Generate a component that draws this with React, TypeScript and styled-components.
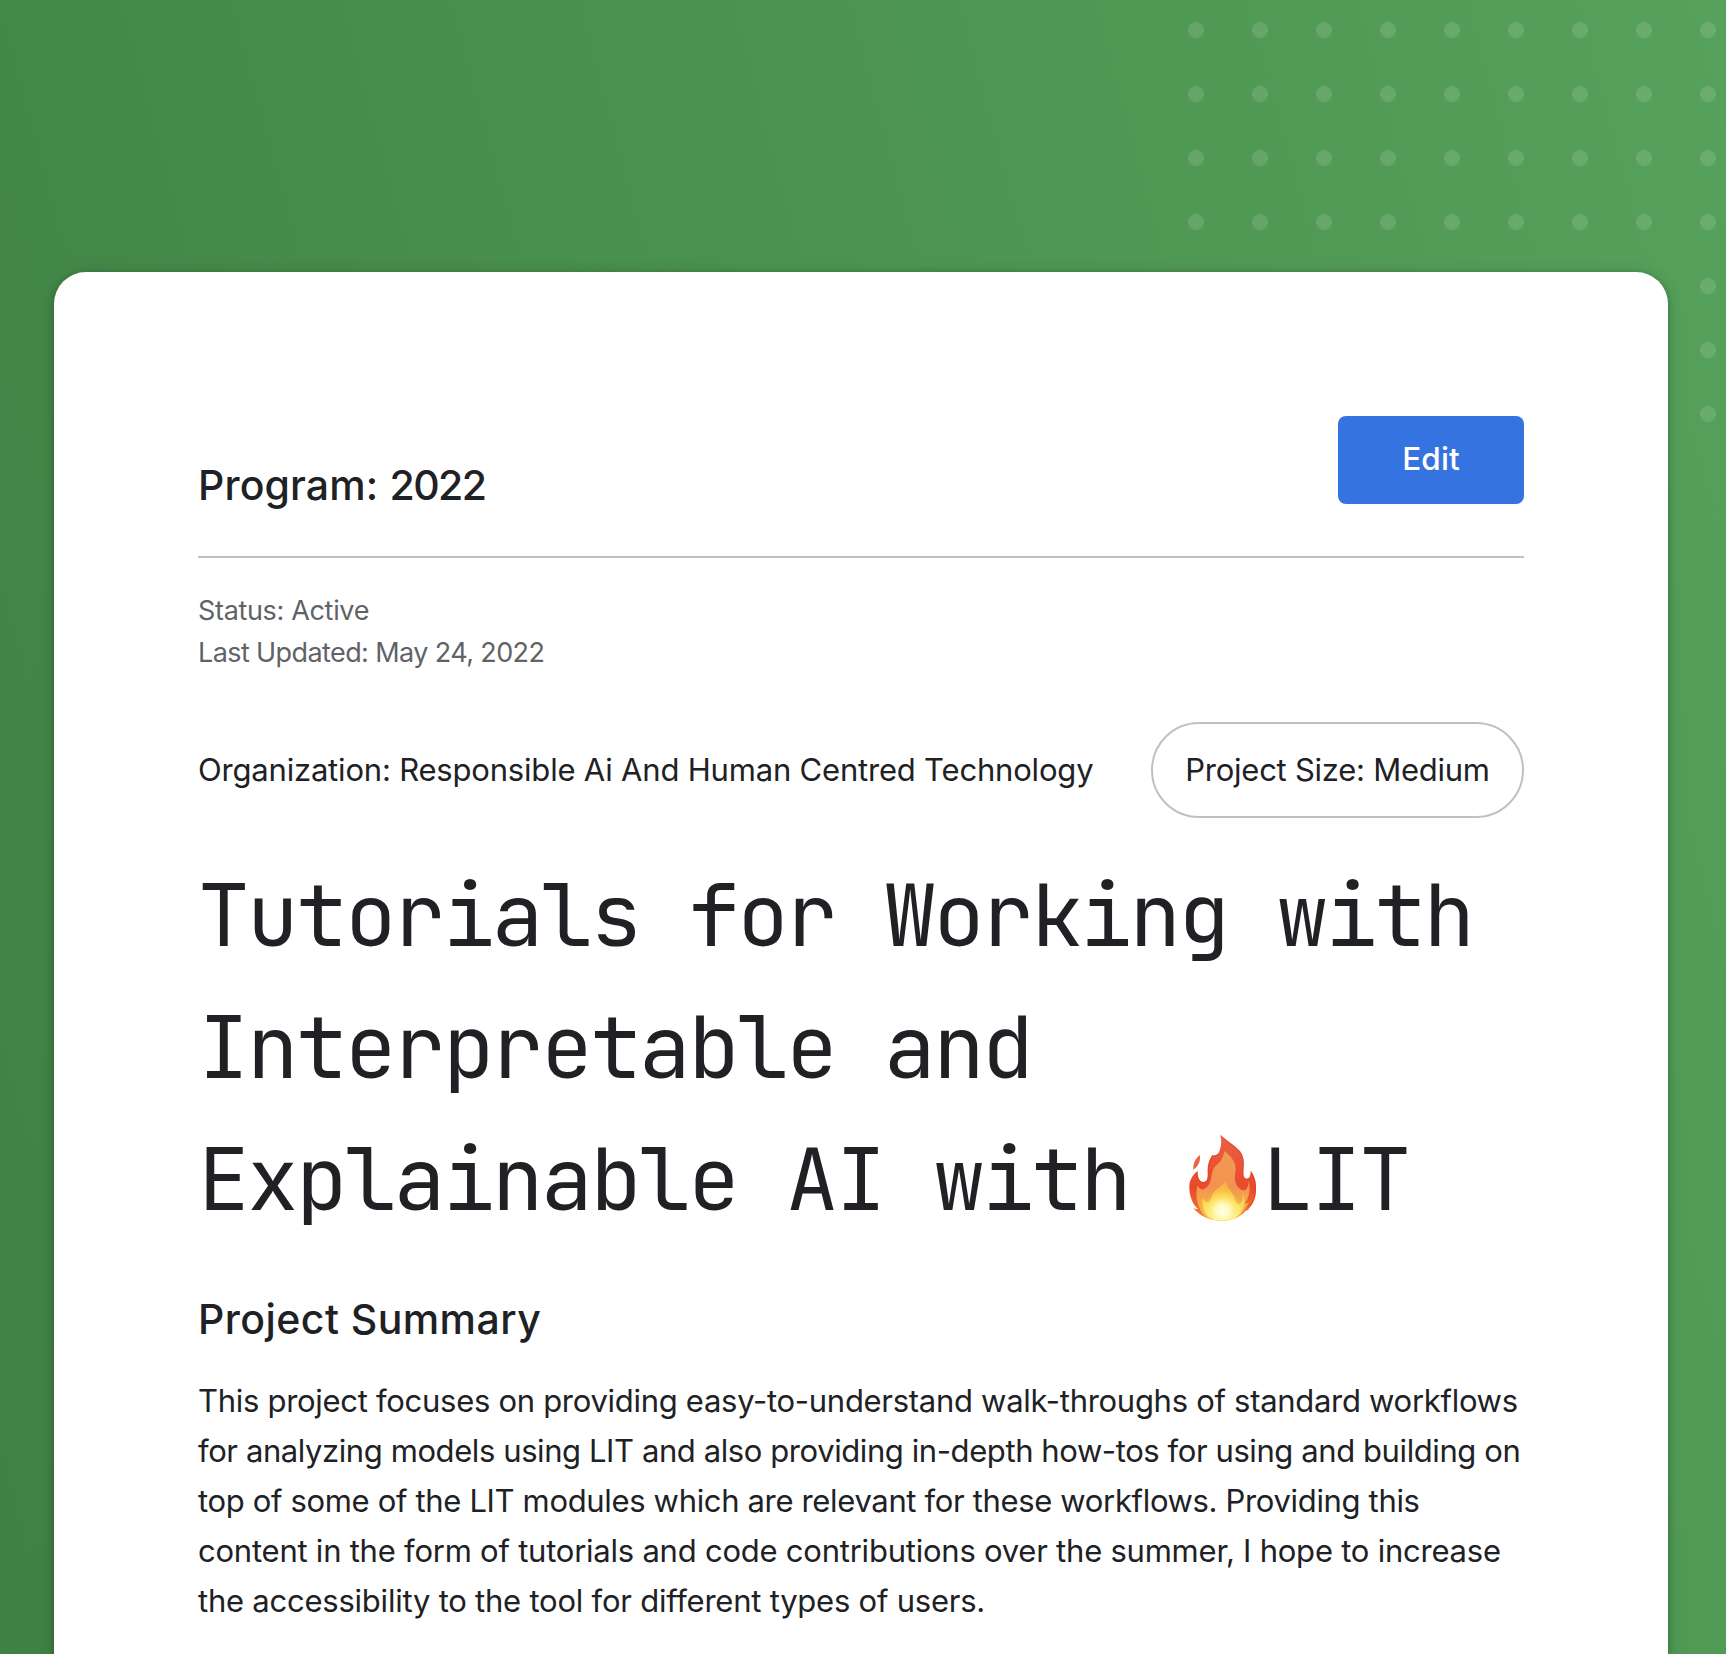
import React from 'react';
import styled, { createGlobalStyle } from 'styled-components';

const sans = `"Google Sans", Inter, Roboto, sans-serif`;
const mono = `"JetBrains Mono", "Roboto Mono", "DejaVu Sans Mono", monospace`;
const ink = '#202124';
const rule = '#bdc1c6';

const GlobalStyle = createGlobalStyle`
  *, *::before, *::after { box-sizing: border-box; }
  body { margin: 0; font-family: ${sans}; color: ${ink}; }
  h1, h2, p { margin: 0; font-weight: 400; }
`;

const Page = styled.div`
  position: relative;
  height: 1654px;
  padding: 272px 58px 0 54px;
  overflow: hidden;
  background: linear-gradient(75deg, #3f8143 0%, #56a15b 100%);
`;

const DotPattern = styled.div`
  position: absolute;
  top: -2px;
  right: -14px;
  width: 576px;
  height: 448px;
  background: radial-gradient(circle at center, rgba(255, 255, 255, 0.12) 7.6px, transparent 8.4px) 0 0 / 64px 64px;
`;

const Card = styled.main`
  position: relative;
  height: 1460px;
  padding: 144px;
  border-radius: 32px;
  background: #fff;
  box-shadow: 0 2px 6px rgba(0, 0, 0, 0.2), 0 2px 16px rgba(0, 0, 0, 0.15);
`;

const Header = styled.header`
  display: flex;
  align-items: flex-end;
  justify-content: space-between;
  padding-bottom: 52px;
  border-bottom: 2px solid ${rule};
`;

const Program = styled.h2`
  font-size: 41px;
  font-weight: 500;
  line-height: 38px;
  letter-spacing: 0.13px;
`;

const Year = styled.span`
  letter-spacing: -1.6px;
`;

const EditButton = styled.button`
  width: 186px;
  height: 88px;
  padding: 0 0 3px;
  border: 0;
  border-radius: 8px;
  background: #3573e1;
  color: #fff;
  font: 500 31.5px ${sans};
  letter-spacing: 0.1px;
`;

const Meta = styled.div`
  margin-top: 32px;
  color: #5f6368;
  font-size: 27px;
  line-height: 42px;
`;

const Line = styled.span<{ $tracking: number }>`
  display: block;
  white-space: nowrap;
  letter-spacing: ${({ $tracking }) => $tracking}px;
`;

const DetailRow = styled.div`
  display: flex;
  align-items: stretch;
  justify-content: space-between;
  height: 96px;
  margin-top: 48px;
  font-size: 31px;
`;

const Organization = styled.div`
  display: flex;
  align-items: center;
  padding-bottom: 2px;
`;

const SizePill = styled.div`
  display: flex;
  align-items: center;
  justify-content: center;
  width: 373px;
  padding-bottom: 2px;
  border: 2px solid ${rule};
  border-radius: 48px;
`;

const Title = styled.h1`
  margin-top: 31px;
  font-family: ${mono};
  font-size: 86px;
  line-height: 132px;
  letter-spacing: -0.03em;
  white-space: nowrap;
`;

const TitleLine = styled.span`
  display: block;
  height: 132px;
`;

const Flame = styled.svg`
  display: inline-block;
  width: 84px;
  height: 100px;
  margin: 0 -3px 0 2px;
  vertical-align: -15px;
`;

const SectionTitle = styled.h2`
  margin-top: 50px;
  font-size: 41px;
  font-weight: 500;
  line-height: 48px;
  letter-spacing: 0.45px;
`;

const Summary = styled.p`
  margin-top: 33px;
  font-size: 31px;
  line-height: 50px;
`;

const summaryLines: [string, number][] = [
  ['This project focuses on providing easy-to-understand walk-throughs of standard workflows', -0.29],
  ['for analyzing models using LIT and also providing in-depth how-tos for using and building on', -0.41],
  ['top of some of the LIT modules which are relevant for these workflows. Providing this', -0.34],
  ['content in the form of tutorials and code contributions over the summer, I hope to increase', -0.23],
  ['the accessibility to the tool for different types of users.', -0.23],
];

const FlameIcon = () => (
  <Flame viewBox="0 0 252 300" role="img" aria-label="fire">
    <defs>
      <linearGradient id="outer" x1="0" y1="0" x2="0" y2="1">
        <stop offset="0" stopColor="#ec6244" />
        <stop offset="0.6" stopColor="#e8492c" />
        <stop offset="0.85" stopColor="#ee6f2e" />
        <stop offset="1" stopColor="#f0a04a" />
      </linearGradient>
      <linearGradient id="middle" x1="0" y1="0" x2="0" y2="1">
        <stop offset="0" stopColor="#f29a55" />
        <stop offset="0.5" stopColor="#f29350" />
        <stop offset="1" stopColor="#f8c440" />
      </linearGradient>
      <linearGradient id="inner" x1="0" y1="0" x2="0" y2="1">
        <stop offset="0" stopColor="#f5a848" />
        <stop offset="0.5" stopColor="#fbd54a" />
        <stop offset="1" stopColor="#fdf08a" />
      </linearGradient>
      <radialGradient id="core" gradientUnits="userSpaceOnUse" cx="128" cy="258" r="62">
        <stop offset="0" stopColor="#fffff0" />
        <stop offset="0.35" stopColor="#fffbc0" stopOpacity="0.95" />
        <stop offset="1" stopColor="#ffe650" stopOpacity="0" />
      </radialGradient>
      <clipPath id="body">
        <path d="M121 30C143 50 165 61 180 79C197 101 190 126 190 146C190 156 194 161 201 161C209 161 213 150 212 138C224 151 230 176 228 196C227 220 219 239 206 250L206 254L196 258C181 276 157 287 128 287C91 287 62 276 40 249C46 252 50 253 54 252C37 236 27 211 28 182C29 163 41 146 53 138C52 153 56 169 68 171C85 173 84 151 83 137C83 118 88 104 97 91C105 92 111 90 115 85C123 72 126 49 121 30Z" />
      </clipPath>
    </defs>
    <path d="M60 90C50 97 38 113 40 134C52 126 62 112 60 90Z" fill="#e9644b" />
    <g clipPath="url(#body)">
      <rect x="20" y="25" width="215" height="270" fill="url(#outer)" />
      <path d="M121 30C143 50 165 61 180 79C197 101 190 126 190 146C190 156 194 161 201 161C209 161 213 150 212 138C224 151 230 176 228 196C227 220 219 239 206 250M53 138C52 153 56 169 68 171C85 173 84 151 83 137C83 118 88 104 97 91C105 92 111 90 115 85" fill="none" stroke="#df3d24" strokeWidth="7" opacity="0.6" />
      <path d="M133 78C155 94 171 115 166 142C162 164 166 183 184 194C199 203 207 182 205 168C216 192 203 226 194 237C199 236 205 233 207 231C190 269 160 290 128 290C92 290 63 270 58 247C48 227 47 201 53 181C60 198 72 196 84 182C98 164 93 139 104 125C117 114 129 106 133 78Z" fill="url(#middle)" />
      <path d="M137 166C137 185 151 193 159 209C166 225 168 240 177 238C186 235 189 221 189 207C200 232 189 257 173 273C145 293 105 292 85 274C70 259 64 238 69 219C76 235 89 237 94 220C99 193 123 190 137 166Z" fill="url(#inner)" />
      <circle cx="128" cy="258" r="62" fill="url(#core)" />
    </g>
  </Flame>
);

export default function App() {
  return (
    <>
      <GlobalStyle />
      <Page>
        <DotPattern />
        <Card>
          <Header>
            <Program>
              Program: <Year>2022</Year>
            </Program>
            <EditButton>Edit</EditButton>
          </Header>
          <Meta>
            <Line $tracking={-0.33}>Status: Active</Line>
            <Line $tracking={-0.6}>Last Updated: May 24, 2022</Line>
          </Meta>
          <DetailRow>
            <Organization>
              <Line $tracking={-0.19}>Organization: Responsible Ai And Human Centred Technology</Line>
            </Organization>
            <SizePill>
              <Line $tracking={-0.26}>Project Size: Medium</Line>
            </SizePill>
          </DetailRow>
          <Title>
            <TitleLine>Tutorials for Working with</TitleLine>
            <TitleLine>Interpretable and</TitleLine>
            <TitleLine>
              Explainable AI with <FlameIcon />LIT
            </TitleLine>
          </Title>
          <SectionTitle>Project Summary</SectionTitle>
          <Summary>
            {summaryLines.map(([text, tracking]) => (
              <Line key={text} $tracking={tracking}>{text}</Line>
            ))}
          </Summary>
        </Card>
      </Page>
    </>
  );
}
